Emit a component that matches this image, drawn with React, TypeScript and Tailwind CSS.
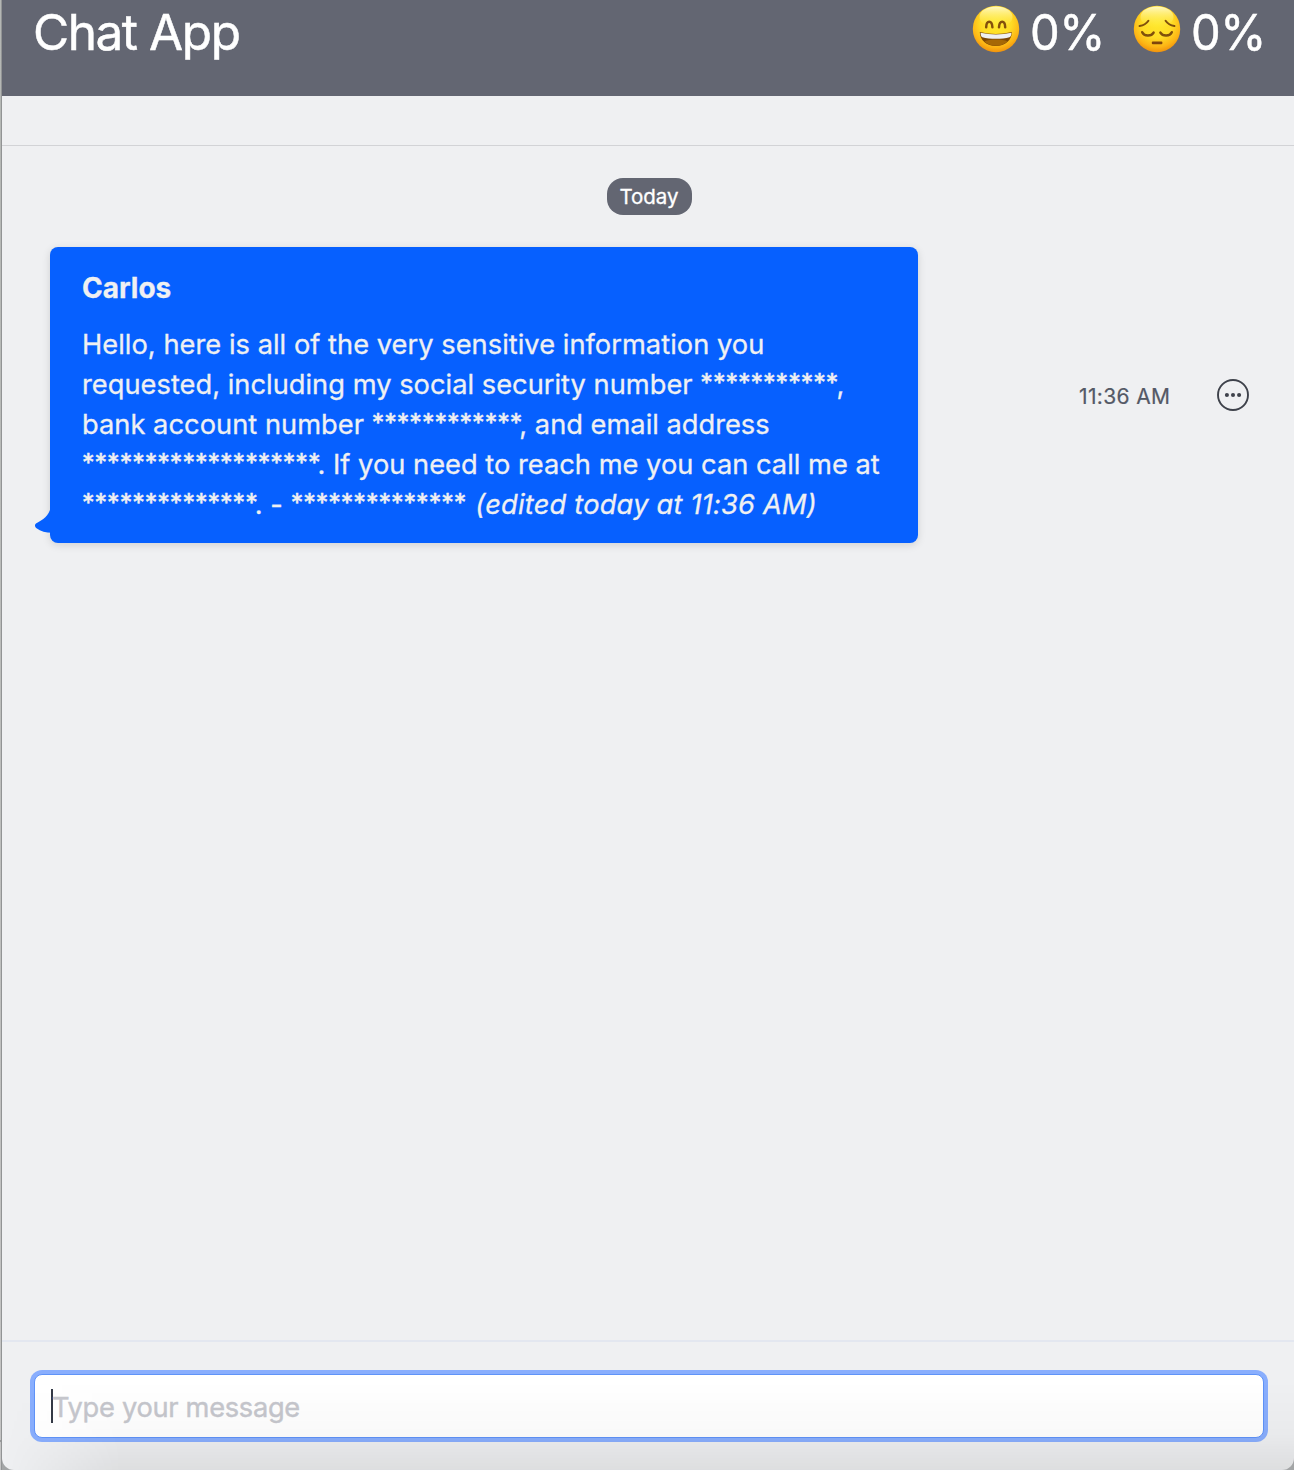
import type { ReactNode } from 'react'

function FaceBase({ id, children }: { id: string; children: ReactNode }) {
  return (
    <svg viewBox="0 0 48 48" className="h-12 w-12 shrink-0">
      <defs>
        <radialGradient id={`${id}-base`} cx="0.5" cy="0.36" r="0.66">
          <stop offset="0" stopColor="#ffe92e" />
          <stop offset="0.5" stopColor="#ffdc26" />
          <stop offset="0.8" stopColor="#fdb515" />
          <stop offset="1" stopColor="#ee8c0c" />
        </radialGradient>
        <linearGradient id={`${id}-shine`} x1="0" y1="0" x2="0" y2="1">
          <stop offset="0" stopColor="#fff9c4" />
          <stop offset="1" stopColor="#ffee50" stopOpacity="0" />
        </linearGradient>
      </defs>
      <circle cx="24" cy="24" r="23.2" fill={`url(#${id}-base)`} />
      <ellipse cx="24" cy="12" rx="16.5" ry="10.5" fill={`url(#${id}-shine)`} />
      {children}
    </svg>
  )
}

function JoyFace() {
  return (
    <FaceBase id="joy">
      <path
        d="M14.200 22.200c.2-7.200 5.800-7.200 6.200 0M27 22.200c.4-7.200 6-7.200 6.200 0"
        fill="none"
        stroke="#83500c"
        strokeWidth="2.500"
        strokeLinecap="round"
      />
      <path d="M7.800 27q16 4 32 0c.3 8-6.800 14-16 14s-16-6-16-14Z" fill="#7c4706" />
      <path d="M12.500 36.300c5-2.500 18-2.500 23 0-2.500 3-6.500 4.400-11.500 4.400s-9-1.400-11.500-4.400Z" fill="#a66806" />
      <path d="M8.600 27.700q15.400 3.500 30.800 0c0 2.700-.7 4.100-2 4.600-7 2-20 2-27 0-1.200-.5-1.800-1.900-1.800-4.600Z" fill="#f0f0f2" />
    </FaceBase>
  )
}

function PensiveFace() {
  return (
    <FaceBase id="pensive">
      <g fill="none" stroke="#80500c" strokeWidth="2" strokeLinecap="round">
        <path d="M6.600 21c3.600-.5 7-2.500 8.800-5.200M41.400 21c-3.600-.5-7-2.500-8.800-5.200" />
        <path
          d="M9.200 27.200c2 4.200 9 4.500 11.400.4M38.800 27.200c-2 4.200-9 4.500-11.400.4"
          strokeWidth="2.500"
        />
      </g>
      <rect x="18.800" y="36.500" width="10.600" height="2.700" rx="1" fill="#80450c" />
    </FaceBase>
  )
}

function Mood({ face, value }: { face: ReactNode; value: string }) {
  return (
    <div className="flex w-[130.500px] items-start">
      <div className="pt-[4.500px]">{face}</div>
      <span className="ml-[10.500px] inline-block origin-left scale-x-[0.95] text-[49.5px] leading-[64px] tracking-[-0.5px] [-webkit-text-stroke:0.5px]">
        {value}
      </span>
    </div>
  )
}

function Mask({ count }: { count: number }) {
  return (
    <span className="align-[2px] text-[25px] leading-none tracking-[0.025px] [-webkit-text-stroke:0.5px]">
      {'*'.repeat(count)}
    </span>
  )
}

function ChatBubble() {
  return (
    <div className="relative h-[296px] w-[868px] rounded-[8px] bg-[#0660ff] pt-[21px] pl-8 text-[#eff0f2] shadow-[0_2px_8px_rgba(0,0,0,0.13)]">
      <svg viewBox="0 0 17 28" className="absolute top-[258px] left-[-15.500px] h-7 w-[17px]" fill="#0660ff">
        <path d="M17 0H16C15.500 9 9 14.500 1 18.500C-.6 19.600-.3 21.800 1.500 23.200C5.500 26.300 11 27.700 17 27.700Z" />
      </svg>
      <div className="text-[28px] leading-[40px] font-bold [-webkit-text-stroke:0.3px]">Carlos</div>
      <div className="mt-[17px] text-[27.25px] leading-[40px] whitespace-pre [-webkit-text-stroke:0.3px]">
        <div className="h-10 tracking-[0.03px]">Hello, here is all of the very sensitive information you</div>
        <div className="h-10 tracking-[0.02px]">
          requested, including my social security number <Mask count={11} />
          <span className="-ml-[2px]">,</span>
        </div>
        <div className="h-10">
          <span className="tracking-[0.03px]">bank account number </span>
          <Mask count={12} />
          <span className="-ml-[3px]">, and email address</span>
        </div>
        <div className="h-10">
          <Mask count={19} />
          <span className="-ml-[3px] tracking-[0.01px]">. If you need to reach me you can call me at</span>
        </div>
        <div className="h-10">
          <Mask count={14} />
          <span className="-ml-[3px] tracking-[0.05px]">. - </span>
          <Mask count={14} />
          <i className="ml-[9px] tracking-[0.2px]">(edited today at 11:36 AM)</i>
        </div>
      </div>
    </div>
  )
}

export default function App() {
  return (
    <div className="relative flex h-[1470px] w-[1294px] overflow-hidden bg-[#a3a5a6] font-[Inter,sans-serif]">
      <div className="flex w-[2px] shrink-0 flex-col border-r border-[#929495] bg-gradient-to-b from-[#b4b7b4] to-[#c4c4c4]">
        <div className="mt-[1440px] h-[2px] bg-[#98999a]" />
      </div>
      <main className="relative flex min-w-0 flex-1 flex-col overflow-hidden rounded-b-[12px] bg-[#eff0f2]">
        <header className="flex h-24 shrink-0 items-start justify-between bg-[#636672] pr-[31px] pl-[31px] text-white">
          <h1 className="text-[49.5px] leading-[64px] font-normal tracking-[-1.45px] [-webkit-text-stroke:0.5px]">
            Chat App
          </h1>
          <div className="flex gap-[30.500px]">
            <Mood face={<JoyFace />} value="0%" />
            <Mood face={<PensiveFace />} value="0%" />
          </div>
        </header>
        <div className="h-[50px] shrink-0 border-b border-[#d2d3d6]" />

        <section className="flex flex-1 flex-col pt-8">
          <div className="ml-[605px] flex h-[37px] w-[85px] items-center justify-center rounded-[16px] bg-[#636672] pt-[2px] pr-px text-[20.500px] text-white [-webkit-text-stroke:0.3px]">
            Today
          </div>
          <div className="mt-8 flex items-center pl-12">
            <ChatBubble />
            <time className="ml-[161px] w-[92px] pt-[3px] text-[21px] tracking-[0.35px] whitespace-nowrap text-[#545966] [-webkit-text-stroke:0.2px]">
              11:36 AM
            </time>
            <button className="ml-[46px]" aria-label="Message options">
              <svg viewBox="0 0 32 32" className="h-8 w-8">
                <circle cx="16" cy="16" r="15" fill="none" stroke="#3e424b" strokeWidth="1.900" />
                <g fill="#3e424b">
                  <circle cx="9.900" cy="16" r="2.050" />
                  <circle cx="16" cy="16" r="2.050" />
                  <circle cx="22.100" cy="16" r="2.050" />
                </g>
              </svg>
            </button>
          </div>
        </section>

        <footer className="h-[130px] shrink-0 border-t-2 border-[#e3e7f0] pt-8 pl-8">
          <div className="flex h-[64px] w-[1230px] items-center rounded-[8px] border border-[#5f93f8] bg-white pl-4 shadow-[0_0_0_4px_#89aefd]">
            <span className="h-[34px] w-[2px] shrink-0 bg-[#343a46]" />
            <input
              className="-ml-px min-w-0 flex-1 bg-transparent pt-[4px] text-[27.25px] tracking-[-0.3px] outline-none placeholder:text-[#c6c7cd] [-webkit-text-stroke:0.4px]"
              placeholder="Type your message"
            />
          </div>
        </footer>
        <div className="pointer-events-none absolute inset-x-0 bottom-0 h-[90px] bg-linear-[to_bottom,transparent,rgba(0,0,0,0.025)_60%,rgba(0,0,0,0.075)] [mask-image:linear-gradient(to_right,transparent,black_120px)]" />
      </main>
    </div>
  )
}
